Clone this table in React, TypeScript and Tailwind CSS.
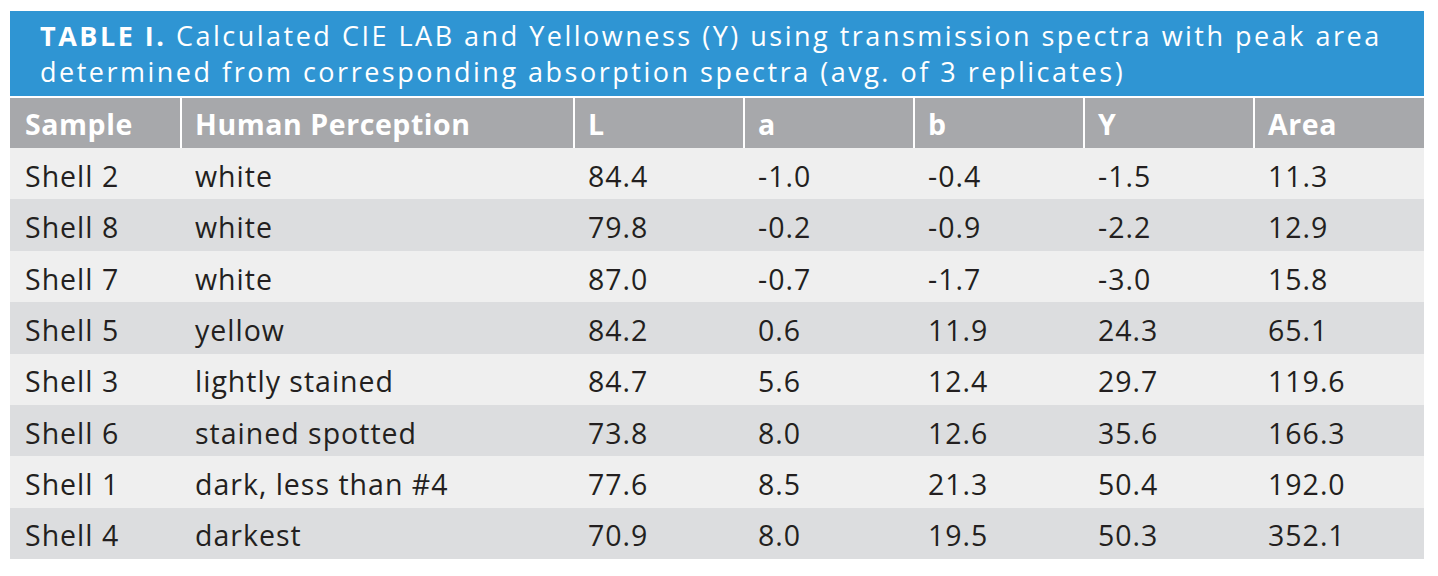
import React from "react";

const rows: string[][] = [
  ["Shell 2", "white", "84.4", "-1.0", "-0.4", "-1.5", "11.3"],
  ["Shell 8", "white", "79.8", "-0.2", "-0.9", "-2.2", "12.9"],
  ["Shell 7", "white", "87.0", "-0.7", "-1.7", "-3.0", "15.8"],
  ["Shell 5", "yellow", "84.2", "0.6", "11.9", "24.3", "65.1"],
  ["Shell 3", "lightly stained", "84.7", "5.6", "12.4", "29.7", "119.6"],
  ["Shell 6", "stained spotted", "73.8", "8.0", "12.6", "35.6", "166.3"],
  ["Shell 1", "dark, less than #4", "77.6", "8.5", "21.3", "50.4", "192.0"],
  ["Shell 4", "darkest", "70.9", "8.0", "19.5", "50.3", "352.1"],
];

const headers = ["Sample", "Human Perception", "L", "a", "b", "Y", "Area"];

export default function App() {
  return (
    <div
      className="bg-white w-[1438px] h-[576px] pl-[10px] pt-[11px]"
      style={{ fontFamily: '"Open Sans", "Liberation Sans", sans-serif' }}
    >
      <div className="w-[1414px]">
        <div className="bg-[#2f95d3] h-[85px] pl-[30px] pt-[7px] text-white text-[27px] leading-[36px] tracking-[2.5px] whitespace-nowrap overflow-hidden">
          <span className="font-bold">TABLE I.</span> Calculated CIE LAB and Yellowness (Y) using transmission spectra with peak area
          <br />
          determined from corresponding absorption spectra (avg. of 3 replicates)
        </div>
        <div className="h-[2px] bg-white" />
        <div className="grid grid-cols-[170px_393px_170px_170px_170px_170px_171px] h-[50px] bg-[#a7a8ab]">
          {headers.map((h, i) => (
            <div
              key={h}
              className={
                "flex items-center pt-[2px] text-white font-bold text-[28.5px] tracking-[0.02em] " +
                (i === 0 ? "pl-[15px]" : "border-l-2 border-white pl-[13px]")
              }
            >
              {h}
            </div>
          ))}
        </div>
        {rows.map((r, ri) => (
          <div
            key={ri}
            className={
              "grid grid-cols-[170px_393px_170px_170px_170px_170px_171px] h-[51.375px] " +
              (ri % 2 === 0 ? "bg-[#efefef]" : "bg-[#dcdddf]")
            }
          >
            {r.map((c, ci) => (
              <div
                key={ci}
                className="flex items-center pl-[15px] pt-[5px] text-[28.5px] text-[#231f20] tracking-[0.035em]"
              >
                {c}
              </div>
            ))}
          </div>
        ))}
      </div>
    </div>
  );
}
